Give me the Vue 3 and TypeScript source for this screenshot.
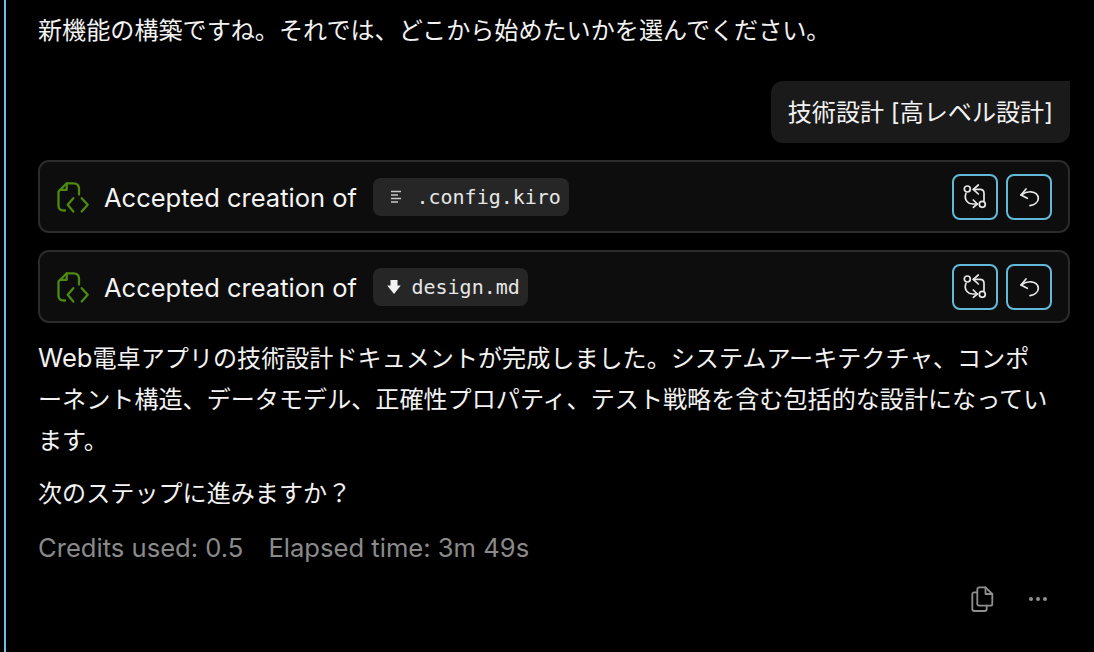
<script setup lang="ts">
const cards = [
  { name: '.config.kiro', kind: 'lines' },
  { name: 'design.md', kind: 'down' }
]
</script>

<template>
  <div class="page">
    <div class="chat">
      <p class="intro">新機能の構築ですね。それでは、どこから始めたいかを選んでください。</p>
      <div class="bubble-row">
        <div class="bubble">技術設計 [高レベル設計]</div>
      </div>
      <div v-for="card in cards" :key="card.name" class="card">
        <svg class="file-icon" width="34" height="34" viewBox="0 0 34 34" fill="none" stroke="#4f8a10" stroke-width="2.3" stroke-linejoin="round" stroke-linecap="round">
          <path d="M9 30.500H8Q2.500 30.500 2.500 26V11.500L10.700 3.300H17.500Q23 3.300 23 8.800V14.500" />
          <path d="M10.700 3.300V9.800H4" />
          <path d="M17.300 18.200L11.700 24.800L17.300 31.500" />
          <path d="M25.700 18.200L31.700 24.800L25.700 31.500" />
        </svg>
        <span class="label">Accepted creation of</span>
        <span class="pill">
          <svg v-if="card.kind === 'lines'" class="pill-icon lines" width="12" height="14" viewBox="0 0 12 14" stroke="#c8c8c8" stroke-width="1.5">
            <path d="M1 1.500H11M1 5H8M1 8.500H11M1 12H8" />
          </svg>
          <svg v-else class="pill-icon down" width="14" height="16" viewBox="0 0 14 16" fill="#f2f2f2">
            <path d="M3.500 1H10.500V6.500H13.800L7 15L0.200 6.500H3.500Z" />
          </svg>
          {{ card.name }}
        </span>
        <span class="actions">
          <button class="action">
            <svg width="26" height="26" viewBox="0 0 26 26" fill="none" stroke="#e8e8e8" stroke-width="1.7" stroke-linecap="round" stroke-linejoin="round">
              <circle cx="5.300" cy="5" r="3" />
              <circle cx="20.300" cy="20.300" r="3" />
              <path d="M4 9.300C2.800 12.500 3.200 15.500 5 17.500C6.500 19.300 8.500 20 10.500 20H15.300" />
              <path d="M11.300 16L15.300 20L11.300 23.300" />
              <path d="M22 16.500V9.300C22 7 20.500 5.300 18 5.300H11.300" />
              <path d="M16.300 1L11.300 5.300L16.300 10" />
            </svg>
          </button>
          <button class="action">
            <svg width="24" height="24" viewBox="0 0 24 24" fill="none" stroke="#e8e8e8" stroke-width="1.7" stroke-linecap="round" stroke-linejoin="round">
              <path d="M4 10C7 8 10.500 6.500 14 6.800C18.500 7.200 21.300 10 21.300 13.500C21.300 17 17.500 19.800 13 20.700" />
              <path d="M9 4L4 10L10.300 13.300" />
            </svg>
          </button>
        </span>
      </div>
      <p class="body-text"><span class="latin">Web</span>電卓アプリの技術設計ドキュメントが完成しました。システムアーキテクチャ、コンポ<br />ーネント構造、データモデル、正確性プロパティ、テスト戦略を含む包括的な設計になってい<br />ます。</p>
      <p class="next">次のステップに進みますか？</p>
      <p class="meta"><span>Credits used: 0.5</span><span>Elapsed time: 3m 49s</span></p>
      <div class="footer">
        <svg width="24" height="26" viewBox="0 0 24 26" fill="none" stroke="#8f8f8f" stroke-width="1.8" stroke-linejoin="round" stroke-linecap="round">
          <path d="M7 6.300H4.300Q2.300 6.300 2.300 8.300V23Q2.300 25 4.300 25H14.700Q16.700 25 16.700 23V19.700" />
          <path d="M9.300 1.300H15.500L22.300 8V17.700Q22.300 19.700 20.300 19.700H9.300Q7.300 19.700 7.300 17.700V3.300Q7.300 1.300 9.300 1.300Z" />
          <path d="M15.500 1.300V8H22.300" />
        </svg>
        <span class="dots"><i></i><i></i><i></i></span>
      </div>
    </div>
  </div>
</template>

<style scoped>
.page {
  margin-left: 4px;
  height: 652px;
  border-left: 2px solid #6cc0e0;
  box-sizing: border-box;
  overflow: hidden;
}

.chat {
  padding: 10px 24px 0 32px;
  color: #f2f2f2;
  font-family: Inter, "Noto Sans CJK JP", sans-serif;
  font-size: 24.1px;
}

p {
  margin: 0;
}

.latin {
  font-size: 25.6px;
}

.intro {
  line-height: 41px;
}

.bubble-row {
  display: flex;
  justify-content: flex-end;
  margin-top: 30px;
}

.bubble {
  height: 62px;
  line-height: 64px;
  padding: 0 17px;
  background: #1a1a1a;
  border-radius: 12px 0 12px 12px;
  white-space: nowrap;
}

.card {
  display: flex;
  align-items: center;
  height: 73px;
  margin-top: 17px;
  padding: 0 16px;
  box-sizing: border-box;
  background: #0d0d0d;
  border: 2px solid #2b2b2b;
  border-radius: 11px;
}

.file-icon {
  flex: none;
}

.label {
  margin-left: 14px;
  padding-top: 2px;
  font-size: 25.5px;
  color: #f4f4f4;
}

.pill {
  display: flex;
  align-items: center;
  height: 38px;
  margin-left: 16.500px;
  padding: 0 8px 0 14px;
  background: #262626;
  border-radius: 8px;
  font-family: "DejaVu Sans Mono", monospace;
  font-size: 20px;
  color: #e6e6e6;
}

.pill-icon {
  flex: none;
}

.pill-icon.lines {
  margin-right: 14px;
  margin-left: 3px;
}

.pill-icon.down {
  margin-right: 10px;
}

.actions {
  display: flex;
  gap: 8px;
  margin-left: auto;
}

.action {
  display: flex;
  align-items: center;
  justify-content: center;
  width: 46px;
  height: 46px;
  padding: 0;
  background: transparent;
  border: 2px solid #62b9d9;
  border-radius: 8px;
}

.body-text {
  margin-top: 14px;
  line-height: 41px;
  white-space: nowrap;
}

.next {
  margin-top: 12px;
  line-height: 41px;
}

.meta {
  display: flex;
  gap: 25px;
  margin-top: 13px;
  line-height: 41px;
  color: #8a8a8a;
  font-size: 25.6px;
}

.footer {
  display: flex;
  align-items: center;
  justify-content: flex-end;
  gap: 35px;
  margin-top: 18px;
  padding-right: 23px;
}

.dots {
  display: flex;
  gap: 3px;
}

.dots i {
  width: 4px;
  height: 4px;
  border-radius: 50%;
  background: #8f8f8f;
}
</style>

<style>
body {
  background: #000;
}
</style>
